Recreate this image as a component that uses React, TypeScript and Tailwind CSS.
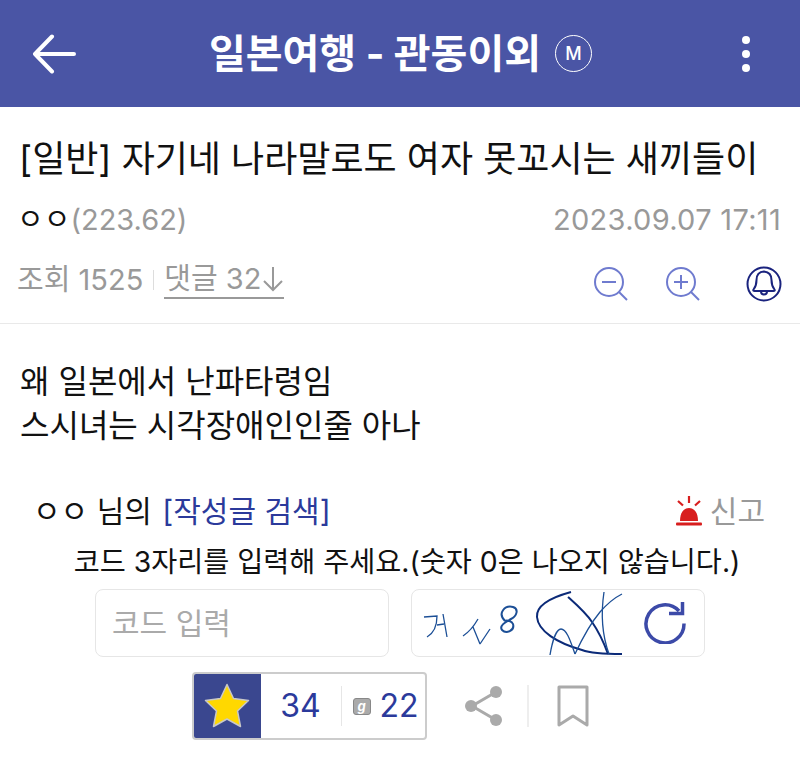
const font = { fontFamily: 'Inter, "Noto Sans CJK KR", sans-serif' };

function ZoomIcon({ plus }: { plus?: boolean }) {
  return (
    <svg width="34" height="34" viewBox="0 0 34 34" fill="none" stroke="#6f7bcf" strokeWidth="2">
      <circle cx="15" cy="15" r="14" />
      <path d="M8 15h14" />
      {plus && <path d="M15 8v14" />}
      <path d="M25 25l8 8" />
    </svg>
  );
}

function BellIcon() {
  return (
    <svg width="36" height="36" viewBox="0 0 36 36" fill="none" stroke="#1a237e" strokeWidth="2">
      <circle cx="18" cy="18" r="16.500" />
      <path d="M18 5.500c-5 0-7.500 3.800-7.500 8.500 0 4.800-1 7-3 9.500-.6 1 0 1.500 1 1.500h19c1 0 1.600-.5 1-1.500-2-2.500-3-4.700-3-9.500 0-4.700-2.500-8-7.500-8.500z" strokeLinejoin="round" />
      <path d="M15 25.500c0 4 6 4 6 0" />
    </svg>
  );
}

function SirenIcon() {
  return (
    <svg width="26" height="30" viewBox="0 0 26 30" fill="#d81e1e">
      <path d="M4 25c0-8 3.500-13 9-13s9 5 9 13z" />
      <rect x="0" y="26.500" width="26" height="3" rx="1" />
      <path d="M13 0v7M2 5l5 4.500M24 5l-5 4.500" stroke="#d81e1e" strokeWidth="2.200" fill="none" />
    </svg>
  );
}

function Captcha() {
  return (
    <svg width="224" height="66" viewBox="0 0 224 66" fill="none" stroke="#1c4f96" strokeWidth="1.300">
      <path d="M12 27l13-1c0 10-3 17-10 21M31 24l4 23M25 35l7-1" />
      <path d="M51 46c6-4 11-10 15-17M61 37l7 17M78 39l-10 15" />
      <path d="M93 31c-8-8 0-16 8-14 6 2 4 9-2 12-6 3-12 7-9 11 4 4 13 1 11-6-1-3-6-4-8-3" strokeWidth="2" />
      <path d="M159 2c-22 6-35 14-34 25 1 14 20 26 45 33 8 3 25 4 40 4" stroke="#0b2a78" strokeWidth="2" />
      <path d="M156 7c10 9 18 16 24 25 7 10 12 21 16 32" stroke="#0b2a78" strokeWidth="2" />
      <path d="M138 65c2-12 6-26 11-26 6 0 10 14 14 25" />
      <path d="M163 64c7-15 15-30 25-42 7-8 14-14 22-18" />
      <path d="M192 2c-3 20-3 40 5 62" />
    </svg>
  );
}

export default function App() {
  return (
    <div className="w-[800px] h-[766px] bg-white overflow-hidden text-[#111]" style={font}>
      {/* HEADER */}
      <div className="h-[107px] bg-[#4a55a5] flex items-center justify-between pl-[32px] pr-[50px] text-white">
        <svg width="44" height="40" viewBox="0 0 44 40" fill="none" stroke="white" strokeWidth="4" strokeLinecap="round" strokeLinejoin="round">
          <path d="M20 2.500L3 20l17 17.500M3 20h39" />
        </svg>
        <div className="flex items-center gap-[14px] text-[40px] font-bold mr-[17px]">
          <span>일본여행 - 관동이외</span>
          <span className="w-[37px] h-[37px] rounded-full border-[1.5px] border-white flex items-center justify-center text-[18px] font-medium">M</span>
        </div>
        <div className="flex flex-col gap-[6px]">
          <span className="w-[8px] h-[8px] rounded-full bg-white" />
          <span className="w-[8px] h-[8px] rounded-full bg-white" />
          <span className="w-[8px] h-[8px] rounded-full bg-white" />
        </div>
      </div>

      {/* TITLE */}
      <div className="px-[20px] border-b border-[#e9e9e9] h-[217px]">
        <div className="text-[36px] leading-[40px] pt-[32px] -ml-[1px] whitespace-nowrap">[일반] 자기네 나라말로도 여자 못꼬시는 새끼들이</div>
        <div className="flex justify-between items-center mt-[24px] text-[29px] leading-[34px] text-[#999]">
          <div className="-ml-[3px]">
            <span className="text-[#111]">ㅇㅇ</span>(223.62)
          </div>
          <div className="-mr-[1px] tracking-[0.3px]">2023.09.07 17:11</div>
        </div>
        <div className="flex justify-between items-start mt-[24px] text-[29px] leading-[36px] text-[#999]">
          <div className="flex items-center -ml-[3px]">
            <span>조회 1525</span>
            <span className="w-[1px] h-[20px] bg-[#ddd] mx-[10px]" />
            <span className="flex items-center border-b-2 border-[#999]">
              댓글 32
              <svg width="22" height="26" viewBox="0 0 22 26" fill="none" stroke="#999" strokeWidth="2" className="ml-[1px]">
                <path d="M11 1v23M2 15l9 9 9-9" />
              </svg>
            </span>
          </div>
          <div className="flex items-center -mr-[2px] mt-[5px]">
            <ZoomIcon />
            <div className="ml-[38px]">
              <ZoomIcon plus />
            </div>
            <div className="ml-[46px]">
              <BellIcon />
            </div>
          </div>
        </div>
      </div>

      {/* BODY */}
      <div className="px-[20px] pt-[36px] text-[32px] leading-[44px]">
        <div>왜 일본에서 난파타령임</div>
        <div>스시녀는 시각장애인인줄 아나</div>
      </div>

      {/* WRITER */}
      <div className="flex justify-between items-center pl-[33px] pr-[35px] mt-[43px] text-[30px] leading-[40px]">
        <div>
          ㅇㅇ 님의 <span className="text-[#2b3a9b] ml-[2px]">[작성글 검색]</span>
        </div>
        <div className="flex items-center gap-[8px] text-[#999]">
          <SirenIcon />
          <span>신고</span>
        </div>
      </div>

      {/* CAPTCHA */}
      <div className="text-center text-[28.3px] leading-[36px] mt-[13px] pl-[14px] whitespace-nowrap">코드 3자리를 입력해 주세요.(숫자 0은 나오지 않습니다.)</div>
      <div className="flex justify-center gap-[22px] mt-[9px]">
        <div className="w-[294px] h-[68px] border border-[#e6e6e6] rounded-[8px] flex items-center px-[16px] text-[30px] text-[#aaa]">코드 입력</div>
        <div className="w-[294px] h-[68px] border border-[#e6e6e6] rounded-[8px] flex items-center justify-between pr-[18px]">
          <Captcha />
          <svg width="42" height="42" viewBox="0 0 42 42" fill="none" stroke="#3c4aa8" strokeWidth="3.500" className="shrink-0">
            <path d="M40 21.500A19 19 0 1 1 35 9" />
            <path d="M38.500 0v11.500H25" />
          </svg>
        </div>
      </div>

      {/* RECOMMEND */}
      <div className="flex justify-center items-center mt-[15px] pr-[20px]">
        <div className="flex items-center h-[68px] w-[235px] border-2 border-[#ccc] rounded-[4px] overflow-hidden text-[32px] text-[#2b3a9b]">
          <div className="w-[67px] h-full bg-[#3a478f] flex items-center justify-center shrink-0">
            <svg width="46" height="46" viewBox="0 0 46 46">
              <path d="M23 1.500l6.500 14 15 2-11 10.500 3 15.500L23 36l-13.500 7.500 3-15.500L1.500 17.500l15-2z" fill="#ffd800" stroke="#c8c8c8" strokeWidth="1.500" strokeLinejoin="round" />
            </svg>
          </div>
          <div className="w-[80px] text-center shrink-0">34</div>
          <div className="w-[1px] h-[40px] bg-[#e6e6e6] shrink-0" />
          <div className="flex items-center gap-[9px] pl-[11px]">
            <span className="w-[18px] h-[17px] rounded-[3px] bg-[#aaa] border border-[#888] text-white text-[13px] leading-[14px] font-bold italic text-center">g</span>
            <span>22</span>
          </div>
        </div>
        <svg width="40" height="42" viewBox="0 0 40 42" className="ml-[37px]" fill="#aaa">
          <path d="M32 7L8 21l24 14" stroke="#aaa" strokeWidth="3" fill="none" />
          <circle cx="32" cy="7" r="6" />
          <circle cx="7" cy="21" r="6" />
          <circle cx="32" cy="35" r="6" />
        </svg>
        <div className="w-[2px] h-[42px] bg-[#eee] ml-[23px]" />
        <svg width="32" height="42" viewBox="0 0 32 42" className="ml-[28px]" fill="none" stroke="#aaa" strokeWidth="3" strokeLinejoin="round">
          <path d="M2 2h28v38L16 31 2 40z" />
        </svg>
      </div>
    </div>
  );
}
